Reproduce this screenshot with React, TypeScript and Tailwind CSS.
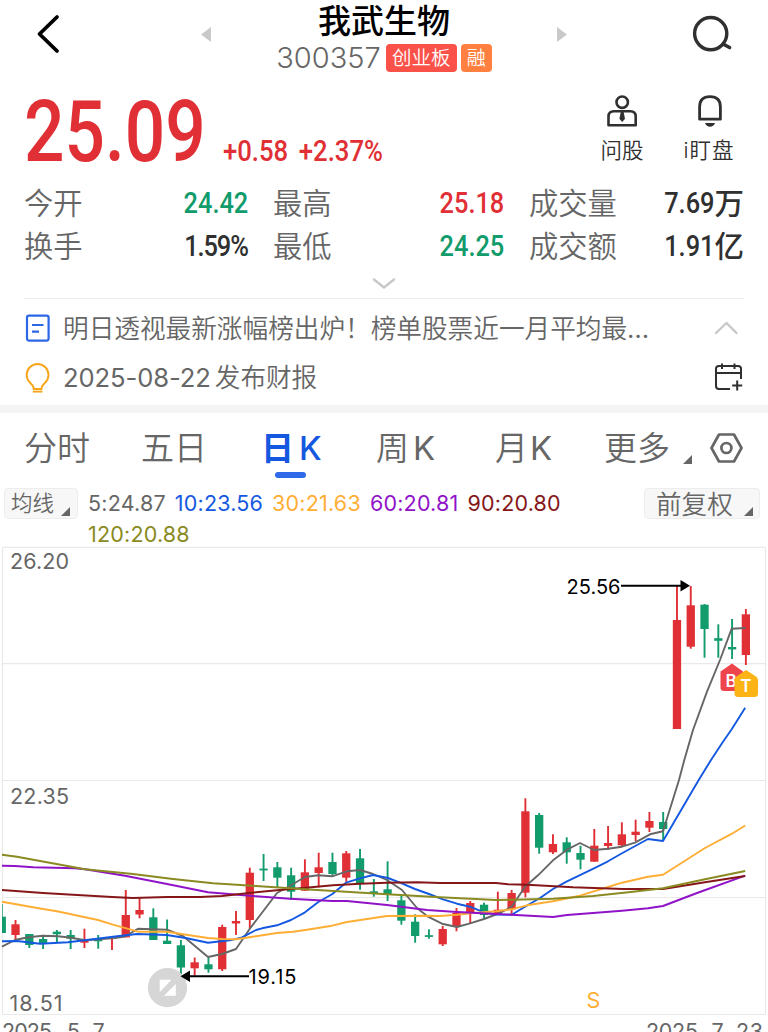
import clsx from 'clsx'

type Candle = [high: number, low: number, top: number, bottom: number, up: 0 | 1]

interface Stat {
  label: string
  value: string
  unit?: string
  color: string
}

const RED = '#e03035'
const GREEN = '#129b6b'

const stats: Stat[] = [
  { label: '今开', value: '24.42', color: 'text-[#129b6b]' },
  { label: '最高', value: '25.18', color: 'text-[#e03035]' },
  { label: '成交量', value: '7.69', unit: '万', color: 'text-[#303030]' },
  { label: '换手', value: '1.59%', color: 'text-[#303030] tracking-[-1.3px]' },
  { label: '最低', value: '24.25', color: 'text-[#129b6b]' },
  { label: '成交额', value: '1.91', unit: '亿', color: 'text-[#303030]' },
]

const averages = [
  { text: '5:24.87', color: 'text-[#666666]' },
  { text: '10:23.56', color: 'text-[#1558e0]' },
  { text: '30:21.63', color: 'text-[#ffae35]' },
  { text: '60:20.81', color: 'text-[#9013c8]' },
  { text: '90:20.80', color: 'text-[#851719]' },
  { text: '120:20.88', color: 'text-[#8a8a22]' },
]

// y coordinates in chart pixels: wick top, wick bottom, body top, body bottom
const candles: Candle[] = [
  [904, 933, 916.7, 933, 0],
  [920, 940, 924.3, 935, 1],
  [934, 948, 934, 945, 0],
  [936, 949, 939, 943, 0],
  [930, 943, 931.7, 934.2, 0],
  [930, 949, 935, 938.7, 0],
  [928.7, 948, 940.5, 942.7, 1],
  [935, 948.7, 939.5, 941.3, 0],
  [938, 950, 938, 939, 1],
  [890, 937.3, 915, 937.3, 1],
  [898.3, 918.3, 910, 914.5, 1],
  [908.3, 940, 917.3, 940, 0],
  [919.5, 944, 940.7, 944, 0],
  [940, 975.5, 945.3, 967.5, 0],
  [957.5, 975.5, 962.3, 968.3, 1],
  [958, 972.7, 964.3, 969.3, 0],
  [924.7, 971, 927, 969.3, 1],
  [911, 935, 921, 923.5, 1],
  [867.7, 928.5, 872.7, 920, 1],
  [854, 881, 868.6, 870.4, 0],
  [862, 887.7, 867.3, 877.7, 0],
  [867.7, 900, 875.3, 891.7, 0],
  [859.3, 890.7, 872.3, 890.7, 1],
  [852.7, 887.3, 867.3, 873, 1],
  [852.7, 876, 862, 874, 0],
  [851, 881.7, 853.3, 877.7, 1],
  [849, 889.7, 858.3, 883.3, 0],
  [879, 896.7, 891.3, 893.3, 0],
  [861.3, 901, 889.3, 894.3, 0],
  [895.7, 924.7, 900.3, 920.7, 0],
  [914.3, 942.7, 921.7, 936, 0],
  [929.3, 938.7, 935.2, 936.9, 0],
  [926, 946, 929, 944.3, 1],
  [908, 931.3, 913, 926.7, 1],
  [901, 924, 903, 912.7, 1],
  [902.7, 918.7, 904.7, 915, 0],
  [891.7, 915, 909.7, 914, 1],
  [890, 915, 893, 909.3, 1],
  [798.3, 897.3, 811.3, 892.7, 1],
  [813, 853.7, 815, 847.7, 0],
  [834.3, 854, 844, 852.3, 1],
  [837.3, 863.7, 842.3, 852.3, 0],
  [845.7, 869.3, 853, 859.7, 0],
  [829, 861.7, 845.7, 861.7, 1],
  [826, 850, 843, 846, 1],
  [822.3, 846.7, 834.3, 845.3, 1],
  [819.7, 841, 831.7, 835, 1],
  [812, 832, 821, 827.7, 1],
  [812, 840, 822, 829, 0],
  [586, 729, 620, 729, 1],
  [586, 648.7, 605.3, 646.7, 1],
  [604, 657.7, 604.7, 629, 0],
  [624.3, 657.7, 638.2, 640.8, 0],
  [619, 659, 647, 649.4, 0],
  [609, 665, 614.3, 655, 1],
]

const lines = [
  {
    color: '#666666',
    points:
      '2,946.7 15,940 28,937.3 43,935.7 58,936.3 71,937.7 85,940.3 115,938 125,936.5 138,928.7 167,929.7 183,936 208,957 222,954 236,949 250,928.5 277,893 288,887 305,877 318,875.3 332,876.3 347,871.3 360,870 373,874 387,880 402,890 417,908 428,916.7 442,923.7 457,927 470,923.3 484,919 500,913 511.7,906.7 525,886.7 538,875.3 553,860.3 567,849.7 580,843 594,850 608,848.7 622,846.7 635,842.7 650,834.3 663,831.3 679,780 684.3,760 693,730 707,691.7 720,660 731.7,628.7 745.5,628',
  },
  {
    color: '#1558e0',
    points:
      '2,941.3 17,941 40,943.7 68,942.3 93,939.3 117,936.3 137,934 167,935 187,938.3 208,942.7 230,940.3 242,937.3 256,930 262,928.3 277,925.3 291,920 305,912.3 318,902.3 332,894.3 346,882.7 360,878.3 373,875 388,878 400,882.7 415,889 429,894 443,899.3 457,903.7 470,906.7 484,912.3 496,914.5 511.7,914.7 525,906.7 540,898 553,889 567,881.3 594,868.3 608,861.3 622,853.3 648,839 663,841 698.7,780 711,760 723,741.7 731.7,729.3 745.2,707.7',
  },
  {
    color: '#ffae35',
    points:
      '2,901.7 43,909 57,911.3 70,914 85,917.3 98,920 112,924.3 138,931.7 167,931.7 183,934.3 208,938 222,939 236,939.3 256,936.3 277,933 293,931.7 307,929.7 332,925.7 347,922 387,916 417,915.7 440,916 457,914.7 473,913 496,911.3 511.7,909.3 527,905.3 553,901.3 580,895.7 608,887 622,882.7 648,876.7 663,874.7 705,848 732,833.7 745.2,825.5',
  },
  {
    color: '#9013c8',
    points:
      '2,865.7 15,866 33,867.3 75,868.3 85,869.3 125,875.7 167,884 208,892.3 256,896.3 290,898.7 332,901 347,901 387,905 427,910 453,911.7 496,914 511,914.7 530,915.7 553,917 567,915 593,913 622,910.7 648,908.3 663,906 697,893 745.2,875.7',
  },
  {
    color: '#851719',
    points:
      '2,890 43,893 112,897 133,898 167,897 200,897 222,896 256,892.3 277,890.3 303,888 333,885.3 360,883.7 387,882.7 417,882.3 440,883 496,883 508,884.3 527,884.7 573,887.3 623,889 663,889 705,882.3 745.2,876',
  },
  {
    color: '#8a8a22',
    points:
      '2,854.7 17,856.7 85,869.3 133,874 173,879 213,883.3 256,886 305,889.3 387,894.3 440,897.3 496,900 513,899.7 553,898.7 593,896 633,891.7 663,888.3 705,879.3 745.2,871',
  },
]

function Corner({ className }: { className?: string }) {
  return (
    <svg viewBox="0 0 9 9" className={clsx('size-[9px] fill-[#666666]', className)}>
      <path d="M9 0V9H0Z" />
    </svg>
  )
}

function TopBar() {
  return (
    <header className="flex h-[80px] items-start">
      <svg viewBox="0 0 24 40" className="ml-9 mt-[14px] h-10 w-6 fill-none stroke-black" strokeWidth={3.8}>
        <path d="M21 3L3.5 20L21 37" strokeLinecap="round" strokeLinejoin="round" />
      </svg>
      <svg viewBox="0 0 10 15" className="ml-[141px] mt-[27px] h-[15px] w-[10px] fill-[#c9c9c9]">
        <path d="M10 0V15L0 7.5Z" />
      </svg>
      <div className="flex w-[346px] flex-col items-center">
        <h1 className="mt-1 h-[34px] text-[33px] font-medium leading-[34px] text-black">我武生物</h1>
        <div className="mt-[6px] flex h-7 items-center">
          <span className="text-[29px] font-light leading-7 text-[#666666]">300357</span>
          <span className="ml-[5px] flex h-7 w-[71px] items-center justify-center rounded bg-[#fa5149] pt-0.5 text-[19.5px] text-white">
            创业板
          </span>
          <span className="ml-1 flex h-7 w-[31px] items-center justify-center rounded bg-[#ff8040] pt-0.5 text-[19px] text-white">
            融
          </span>
        </div>
      </div>
      <svg viewBox="0 0 10 15" className="mt-[27px] h-[15px] w-[10px] fill-[#c9c9c9]">
        <path d="M0 0V15L10 7.5Z" />
      </svg>
      <svg
        viewBox="0 0 42 38"
        className="ml-[125px] mt-[15px] h-[38px] w-[42px] fill-none stroke-[#303030]"
        strokeWidth={3.4}
      >
        <circle cx="18.7" cy="18.6" r="16.1" />
        <path d="M31 29L37.6 32.6" strokeLinecap="round" />
      </svg>
    </header>
  )
}

function Quote() {
  return (
    <section className="flex h-[102px] items-start pl-6">
      <div className="w-[199px]">
        <span className="mt-[7px] block w-max origin-left scale-x-[0.828] font-[Roboto] text-[86px] font-[550] leading-[90px] text-[#e03035]">
          25.09
        </span>
      </div>
      <div className="mt-[55px] w-[377px]">
        <span className="block w-max origin-left scale-x-[0.87] font-[Roboto] text-[29.5px] font-medium leading-8 text-[#e03035] [word-spacing:5px]">
          +0.58 +2.37%
        </span>
      </div>
      <div className="flex w-[44px] flex-col items-center">
        <svg viewBox="0 0 30 32" className="mt-[15px] h-8 w-[30px] fill-none stroke-[#303030]" strokeWidth={2.6}>
          <circle cx="15.2" cy="7.2" r="5.7" />
          <path d="M1.5 30.3V21.5Q1.5 16.3 6.8 16.3H23.4Q28.7 16.3 28.7 21.5V30.3Z" strokeLinejoin="round" />
          <path d="M13.8 17H16.6L18 23.800L15.200 27L12.400 23.800Z" fill="#303030" stroke="none" />
        </svg>
        <span className="mt-[11px] text-[21.5px] leading-6 text-[#303030]">问股</span>
      </div>
      <div className="ml-[36px] flex w-[58px] flex-col items-center">
        <svg viewBox="0 0 26 32" className="ml-px mt-[15px] h-8 w-[26px] fill-none stroke-[#303030]" strokeWidth={2.8}>
          <path d="M2.6 24.2V12Q2.6 1.6 13 1.6T23.4 12V24.2Z" strokeLinejoin="round" />
          <path d="M8 28H18Q16.5 31.8 13 31.8T8 28Z" fill="#303030" stroke="none" />
        </svg>
        <span className="mt-[11px] whitespace-nowrap text-[21.5px] leading-6 tracking-[1px] text-[#303030]">i盯盘</span>
      </div>
    </section>
  )
}

function Stats() {
  return (
    <section className="grid h-[86px] auto-rows-[43px] grid-cols-[224px_231px_215px] gap-x-[25px] pl-6">
      {stats.map((stat) => (
        <div key={stat.label} className="flex h-[43px] items-center justify-between">
          <span className="text-[29.3px] leading-[43px] tracking-normal text-[#666666]">{stat.label}</span>
          <span className={clsx('flex items-center', stat.color)}>
            <span className="origin-right scale-x-[0.86] font-[Roboto] text-[29.5px] font-medium leading-[43px]">
              {stat.value}
            </span>
            {stat.unit && <span className="text-[29.5px] font-medium leading-[43px]">{stat.unit}</span>}
          </span>
        </div>
      ))}
    </section>
  )
}

function News() {
  return (
    <section className="mx-6 h-[137px]">
      <div className="flex h-[31px] justify-center border-b border-[#ececec]">
        <svg viewBox="0 0 24 12" className="mt-[10px] h-3 w-6 fill-none stroke-[#c8c8c8]" strokeWidth={2.4}>
          <path d="M2 1.5L12 9.5L22 1.5" strokeLinecap="round" strokeLinejoin="round" />
        </svg>
      </div>
      <div className="flex h-[58px] items-center">
        <svg viewBox="0 0 26 28" className="ml-px h-7 w-[26px] fill-none stroke-[#2c67e6]" strokeWidth={2.2}>
          <rect x="2" y="1.6" width="21.6" height="25" rx="2" />
          <path d="M7 11H18.5M7 17.6H14" />
        </svg>
        <span className="ml-[12px] w-[641px] whitespace-nowrap pt-px text-[25.65px] leading-[58px] text-[#666666]">
          明日透视最新涨幅榜出炉！榜单股票近一月平均最
          <span className="font-normal tracking-[1px]">…</span>
        </span>
        <svg viewBox="0 0 24 14" className="ml-[10px] h-[14px] w-6 fill-none stroke-[#c8c8c8]" strokeWidth={2.4}>
          <path d="M2 12L12.5 2L22.5 12" strokeLinecap="round" strokeLinejoin="round" />
        </svg>
      </div>
      <div className="flex h-[42px] items-center">
        <svg viewBox="0 0 26 30" className="ml-px h-[30px] w-[26px] fill-none stroke-[#f8a51b]" strokeWidth={1.9}>
          <path
            d="M8.6 26V24.500Q8 22.500 5.100 19.800A10.900 10.900 0 1 1 20.100 19.800Q17.200 22.500 16.600 24.500V26Z"
            strokeLinejoin="round"
          />
          <path d="M7.800 28.600H17.400" />
        </svg>
        <span className="ml-[12px] w-[639px] text-[25.6px] leading-[42px] text-[#666666]">
          <span className="font-normal tracking-[-0.1px]">2025-08-22</span>
          <span className="ml-1">发布财报</span>
        </span>
        <svg viewBox="0 0 30 30" className="ml-[11px] mb-0.5 size-[30px] fill-none stroke-[#303030]" strokeWidth={2}>
          <path d="M17 27H6Q3 27 3 24V6.500Q3 4 6 4H25Q28 4 28 6.500V17M3 11H28M9 1.500V7M21.500 1.500V7" />
          <path d="M24.200 18.500V28.500M19.200 23.500H29.200" />
        </svg>
      </div>
    </section>
  )
}

function Tabs() {
  return (
    <nav className="grid h-[72px] grid-cols-[117px_120px_115px_119px_109px_105px_34px] border-t-8 border-[#f4f4f4] pl-6 text-[33px] leading-[70px] text-[#666666]">
      <span>分时</span>
      <span>五日</span>
      <span className="relative font-semibold text-[#1558e0]">
        日<span className="ml-[5px] font-medium">K</span>
        <span className="absolute left-[14px] top-[59px] h-[6px] w-[31px] rounded-full bg-[#2f6ae8]" />
      </span>
      <span>
        周<span className="ml-[4px] font-normal">K</span>
      </span>
      <span>
        月<span className="ml-[2px] font-normal">K</span>
      </span>
      <span className="flex">
        更多
        <Corner className="ml-[13px] mt-[42px]" />
      </span>
      <svg viewBox="0 0 34 32" className="mt-[19px] h-8 w-[34px] fill-none stroke-[#666666]" strokeWidth={2.7}>
        <path d="M10 2.500H25L32.500 16L25 29.500H10L2.500 16Z" strokeLinejoin="round" />
        <circle cx="17.400" cy="16" r="5" />
      </svg>
    </nav>
  )
}

function AverageBar() {
  return (
    <section className="flex h-[69px] items-start pl-1 pt-[11px]">
      <button className="flex h-[31px] w-[74px] items-center rounded border border-[#ededed] bg-[#f7f7f7] pl-[6px] text-[21.5px] text-[#666666]">
        均线
        <Corner className="ml-[7px] mt-[15px]" />
      </button>
      <div className="ml-[10px] flex w-[556px] flex-wrap content-start gap-x-[9px] text-[21.5px] font-normal leading-[31px] tracking-[0.2px]">
        {averages.map((avg) => (
          <span key={avg.text} className={avg.color}>
            {avg.text}
          </span>
        ))}
      </div>
      <button className="flex h-[31px] w-[116px] items-center rounded border border-[#ededed] bg-[#f7f7f7] pl-[11px] text-[25.6px] text-[#666666]">
        <span className="mt-[3px]">前复权</span>
        <Corner className="ml-[11px] mt-[15px]" />
      </button>
    </section>
  )
}

function Chart() {
  return (
    <svg viewBox="0 546 768 486" className="block h-[486px] w-[768px] font-normal">
      <g fill="none" stroke="#e9e9e9" strokeWidth={1.2}>
        <path d="M2.500 547.400H765.500V1014.500H2.500ZM2.500 663.600H765.500M2.500 780.500H765.500M2.500 897.500H765.500" />
      </g>

      <g clipPath="url(#plot)">
        {candles.map(([high, low, top, bottom, up], i) => {
          const x = 1.7 + i * 13.78
          return (
            <g key={i} fill={up ? RED : GREEN}>
              <rect x={x - 0.9} y={high} width={1.9} height={low - high} />
              <rect x={x - 4.1} y={top} width={8.3} height={bottom - top} />
            </g>
          )
        })}
      </g>
      <clipPath id="plot">
        <rect x="2" y="547" width="764" height="468" />
      </clipPath>

      {lines.map((line) => (
        <polyline
          key={line.color}
          points={line.points}
          fill="none"
          stroke={line.color}
          strokeWidth={1.9}
          strokeLinejoin="round"
        />
      ))}

      {/* Fullscreen toggle */}
      <circle cx="167.500" cy="987.700" r="19.600" fill="#d6d6d6" />
      <path
        d="M160 980H171L160 991.500ZM175.500 984.500V995.500H164.500Z"
        fill="#fff"
        stroke="#fff"
        strokeWidth={0.6}
        strokeLinejoin="round"
      />

      {/* High / low markers */}
      <g stroke="#000" strokeWidth={2}>
        <path d="M621 585.700H682M189 976.300H249" />
        <path d="M680.500 580V591.400L690 585.700ZM190 970.600V982L180.500 976.300Z" stroke="none" />
      </g>
      <g fontSize="20" fill="#000">
        <text x="566.500" y="593.500" textLength="54">25.56</text>
        <text x="248.500" y="984" textLength="48">19.15</text>
      </g>

      <g fontSize="21.500" fill="#666666">
        <text x="10" y="569.300" textLength="59">26.20</text>
        <text x="10" y="803.500" textLength="59">22.35</text>
        <text x="9.500" y="1011" textLength="53">18.51</text>
        <text x="2" y="1038.500" textLength="50">2025</text>
        <text x="52" y="1038.500">.</text>
        <text x="67" y="1038.500">5</text>
        <text x="79" y="1038.500">.</text>
        <text x="92.500" y="1038.500">7</text>
        <text x="646" y="1038.500" textLength="52">2025</text>
        <text x="698" y="1038.500">.</text>
        <text x="711.500" y="1038.500">7</text>
        <text x="722" y="1038.500">.</text>
        <text x="736" y="1038.500" textLength="27">23</text>
      </g>
      <text x="586.500" y="1007.500" fontSize="21.500" fill="#ffae35">S</text>

      {/* Trade markers */}
      <path d="M732 663.500L743 671.500V687.500Q743 691 739.500 691H724Q720.500 691 720.500 687.500V671.500Z" fill="#ee444b" />
      <text x="725.500" y="686.500" fontSize="17" fontWeight="600" fill="#fff">B</text>
      <path d="M746 670L756 676.500Q758 678 758 680V693.500Q758 697 754.500 697H738Q734.500 697 734.500 693.500V680Q734.500 678 736.500 676.500Z" fill="#fcb316" />
      <text x="740.200" y="692.300" fontSize="17" fontWeight="600" fill="#fff">T</text>
    </svg>
  )
}

export default function App() {
  return (
    <main className="h-[1032px] w-[768px] overflow-hidden bg-white font-['Inter','Noto_Sans_CJK_SC',sans-serif] font-[350]">
      <TopBar />
      <Quote />
      <Stats />
      <News />
      <Tabs />
      <AverageBar />
      <Chart />
    </main>
  )
}
